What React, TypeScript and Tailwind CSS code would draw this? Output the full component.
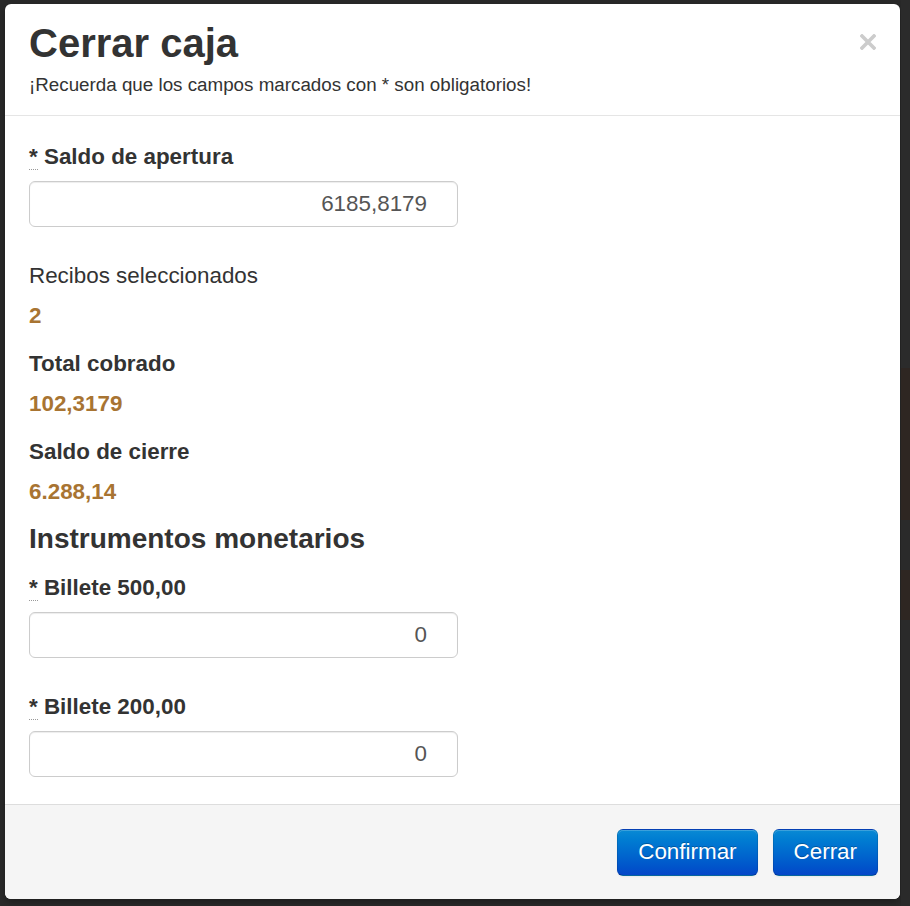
import React from 'react';

const font = { fontFamily: '"Liberation Sans", Arial, Helvetica, sans-serif' };

const Required: React.FC = () => (
  <abbr title="requerido" className="no-underline border-b border-dotted border-[#999] cursor-help">*</abbr>
);

const MoneyInput: React.FC<{ value: string }> = ({ value }) => (
  <input
    type="text"
    defaultValue={value}
    className="block mt-2 w-[429px] h-[46px] rounded-[6px] border border-[#ccc] bg-white pl-[10px] pr-[30px] text-right text-[22.4px] text-[#555] shadow-[inset_0_1px_1px_rgba(0,0,0,0.075)] outline-none"
  />
);

const Field: React.FC<{ label: string; value: string; className?: string }> = ({ label, value, className }) => (
  <div className={className}>
    <label className="block text-[22.4px] leading-[32px] font-bold text-[#333]">
      <Required /> {label}
    </label>
    <MoneyInput value={value} />
  </div>
);

const Stat: React.FC<{ label: string; value: string; bold?: boolean; className?: string }> = ({ label, value, bold = true, className }) => (
  <div className={className}>
    <div className={`text-[22.4px] leading-[32px] text-[#333] ${bold ? 'font-bold' : 'font-normal'}`}>{label}</div>
    <div className="mt-2 text-[22.4px] leading-[32px] font-bold text-[#a87432]">{value}</div>
  </div>
);

const PrimaryButton: React.FC<{ children: React.ReactNode }> = ({ children }) => (
  <button className="h-[47px] px-[20px] rounded-[6px] border border-[rgba(0,0,0,0.1)] border-b-[rgba(0,0,0,0.25)] bg-gradient-to-b from-[#0a8ad4] to-[#0646c8] text-white text-[22.4px] leading-[28px] [text-shadow:0_-1px_0_rgba(0,0,0,0.25)] shadow-[inset_0_1px_0_rgba(255,255,255,0.2),0_1px_2px_rgba(0,0,0,0.05)]">
    {children}
  </button>
);

// what little of the page behind the backdrop peeks out on the right
const BackdropStrip: React.FC = () => (
  <div className="w-[9px] h-full flex flex-col">
    <div className="h-[250px] bg-[#2b2b2b]" />
    <div className="h-[30px] bg-[#2e2e2e]" />
    <div className="h-[88px] bg-[#2b2b2b]" />
    <div className="h-[152px] bg-[#2e2622]" />
    <div className="h-[50px] bg-[#2a2a2a]" />
    <div className="h-[50px] bg-[#2e2622]" />
    <div className="flex-1 bg-[#2a2a2a]" />
  </div>
);

export default function App() {
  return (
    <div style={font} className="w-[910px] h-[906px] bg-[#292929] flex overflow-hidden">
      <div className="w-[6px]" />
      <div className="w-[895px] pt-[4px]">
        <div className="w-[895px] h-[895px] bg-white rounded-[6px] shadow-[0_3px_7px_rgba(0,0,0,0.3)] flex flex-col overflow-hidden">
          {/* header */}
          <div className="px-[24px] pt-[17px] pb-[18.5px] border-b border-[#e5e5e5]">
            <div className="flex justify-between items-start">
              <h3 className="text-[40px] leading-[44px] font-bold text-[#333]">Cerrar caja</h3>
              <button className="mt-[13px] w-[16px] h-[16px]" aria-label="Cerrar">
                <svg viewBox="0 0 16 16" className="w-[16px] h-[16px]">
                  <path d="M2 2 L14 14 M14 2 L2 14" stroke="#cccccc" strokeWidth="3.6" strokeLinecap="square" />
                </svg>
              </button>
            </div>
            <p className="mt-[7.5px] text-[18.8px] leading-[24px] text-[#333]">
              ¡Recuerda que los campos marcados con * son obligatorios!
            </p>
          </div>

          {/* body */}
          <div className="flex-1 px-[24px] pt-[25px]">
            <Field label="Saldo de apertura" value="6185,8179" />
            <Stat className="mt-[33px]" label="Recibos seleccionados" value="2" bold={false} />
            <Stat className="mt-4" label="Total cobrado" value="102,3179" />
            <Stat className="mt-4" label="Saldo de cierre" value="6.288,14" />
            <h4 className="mt-[15px] text-[28px] leading-[32px] font-bold text-[#333]">Instrumentos monetarios</h4>
            <Field className="mt-[17px]" label="Billete 500,00" value="0" />
            <Field className="mt-[33px]" label="Billete 200,00" value="0" />
          </div>

          {/* footer */}
          <div className="h-[95px] border-t border-[#ddd] bg-[#f5f5f5] flex items-center justify-end gap-[15px] pr-[22px]">
            <PrimaryButton>Confirmar</PrimaryButton>
            <PrimaryButton>Cerrar</PrimaryButton>
          </div>
        </div>
      </div>
      <div className="pl-[1px]">
        <BackdropStrip />
      </div>
    </div>
  );
}
